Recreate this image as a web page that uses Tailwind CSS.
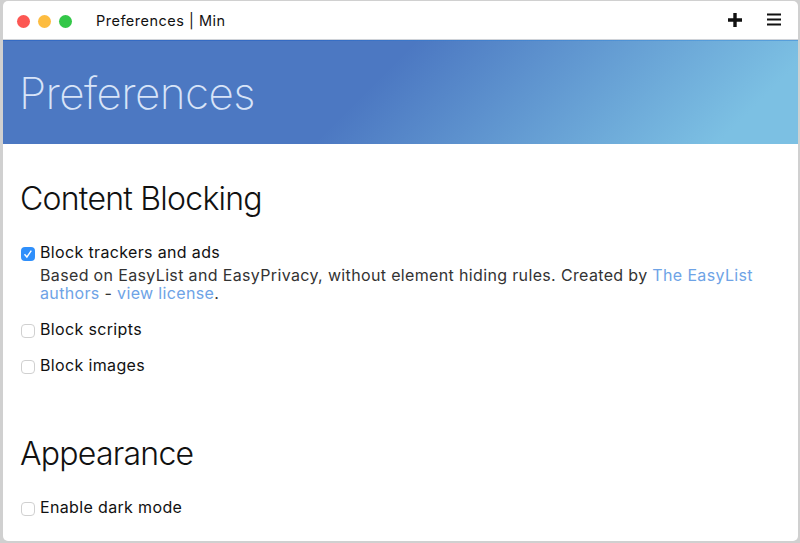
<!DOCTYPE html>
<html lang="en">
<head>
  <meta charset="UTF-8" />
  <title>Preferences | Min</title>
  <script src="https://cdn.jsdelivr.net/npm/@tailwindcss/browser@4"></script>
</head>
<body class="bg-[#d0d0d0] w-[800px] h-[543px] overflow-hidden font-['Inter',sans-serif]">
  <div class="ml-[3px] mr-[2px] mb-[2px] mt-[1px] h-[540px] bg-white rounded-t-[5px] rounded-b-[5px] overflow-hidden">

    <!-- title bar -->
    <div class="h-[36px] flex items-center pt-[2px] pl-[14px] pr-[17px] border-b border-[#d0d3d8] box-content">
      <div class="flex gap-[8px]">
        <span class="w-[13px] h-[13px] rounded-full bg-[#fc5753]"></span>
        <span class="w-[13px] h-[13px] rounded-full bg-[#fdbc40]"></span>
        <span class="w-[13px] h-[13px] rounded-full bg-[#33c748]"></span>
      </div>
      <div class="ml-[24px] text-[14.5px] tracking-[0.5px] text-[#111]">Preferences | Min</div>
      <div class="ml-auto flex items-center gap-[25px] -mt-[3px]">
        <svg width="14" height="14" viewBox="0 0 14 14"><path d="M7 0v14M0 7h14" stroke="#111" stroke-width="3.4"/></svg>
        <svg width="14" height="13" viewBox="0 0 14 13"><path d="M0 1.5h14M0 6.5h14M0 11.5h14" stroke="#111" stroke-width="2"/></svg>
      </div>
    </div>

    <!-- banner -->
    <div class="h-[104px] flex items-center pl-[16px] border-t border-[#0050c8]/30 bg-linear-[135deg] from-[#4c78c2] from-46% to-[#7cc0e3] to-91% text-[#d8e4f8]">
      <h1 class="text-[44px] font-[250] tracking-[-0.6px]">Preferences</h1>
    </div>

    <!-- settings -->
    <div class="pl-[18px] pr-[30px] text-[#111]">
      <h2 class="mt-[35px] -ml-[1px] text-[32px] leading-[40px] font-light tracking-[-0.75px]">Content Blocking</h2>

      <div class="mt-[22px] flex items-start gap-[5px]">
        <span class="mt-[6px] shrink-0 w-[14px] h-[14px] rounded-[4px] bg-[#2f8ffb] flex items-center justify-center">
          <svg width="12" height="12" viewBox="0 0 12 12"><path d="M2.5 6.2l2.4 2.8 4.4-6.4" fill="none" stroke="#fff" stroke-width="1.4"/></svg>
        </span>
        <div>
          <div class="text-[16px] leading-[22px] tracking-[0.35px]">Block trackers and ads</div>
          <div class="text-[16px] leading-[18px] tracking-[0.35px] text-[#333] mt-[3px]">Based on EasyList and EasyPrivacy, without element hiding rules. Created by <a class="text-[#6ea3e6]">The EasyList authors</a> - <a class="text-[#6ea3e6]">view license</a>.</div>
        </div>
      </div>

      <div class="mt-[16px] flex items-start gap-[5px]">
        <span class="mt-[6px] shrink-0 w-[14px] h-[14px] rounded-[4px] border border-[#d0d0d0]"></span>
        <div class="text-[16px] leading-[22px] tracking-[0.35px]">Block scripts</div>
      </div>
      <div class="mt-[14px] flex items-start gap-[5px]">
        <span class="mt-[6px] shrink-0 w-[14px] h-[14px] rounded-[4px] border border-[#d0d0d0]"></span>
        <div class="text-[16px] leading-[22px] tracking-[0.35px]">Block images</div>
      </div>

      <h2 class="mt-[58px] -ml-[1px] text-[32px] leading-[40px] font-light tracking-[-0.75px]">Appearance</h2>
      <div class="mt-[22px] flex items-start gap-[5px]">
        <span class="mt-[6px] shrink-0 w-[14px] h-[14px] rounded-[4px] border border-[#d0d0d0]"></span>
        <div class="text-[16px] leading-[22px] tracking-[0.35px]">Enable dark mode</div>
      </div>
    </div>
  </div>
</body>
</html>
